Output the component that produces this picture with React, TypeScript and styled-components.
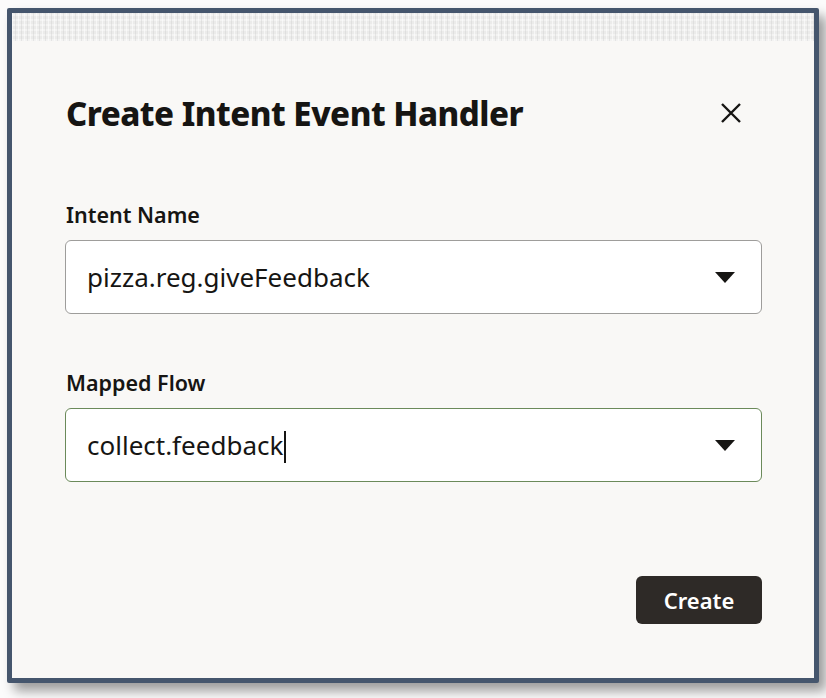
import React from "react";
import styled, { createGlobalStyle } from "styled-components";

const Global = createGlobalStyle`
  html, body { margin: 0; padding: 0; background: #fbfbfb; }
  body { font-family: "Noto Sans", "Open Sans", sans-serif; }
`;

const Stage = styled.div`
  width: 826px;
  height: 698px;
  padding: 8px 0 0 7px;
  box-sizing: border-box;
`;

const Frame = styled.div`
  width: 812px;
  height: 675px;
  box-sizing: border-box;
  border: 5px solid #45566d;
  border-radius: 2px;
  background: #f9f8f6;
  box-shadow: 7px 8px 12px rgba(0, 0, 0, 0.38);
  display: flex;
  flex-direction: column;
`;

const TextureStrip = styled.div`
  height: 28px;
  flex: none;
  background-color: #ebebea;
  background-image:
    repeating-linear-gradient(90deg, rgba(255,255,255,0.55) 0 1px, transparent 1px 3px, rgba(200,200,200,0.35) 3px 4px, transparent 4px 6px),
    repeating-linear-gradient(0deg, rgba(255,255,255,0.4) 0 2px, transparent 2px 5px);
`;

const Body = styled.div`
  flex: 1;
  display: flex;
  flex-direction: column;
  padding: 50px 52px 0 53px;
`;

const Header = styled.div`
  display: flex;
  align-items: center;
  justify-content: space-between;
  height: 44px;
`;

const Title = styled.h1`
  margin: 0 0 0 1px;
  font-family: "Noto Sans", sans-serif;
  font-weight: 800;
  font-size: 33px;
  letter-spacing: -0.5px;
  color: #161513;
`;

const CloseButton = styled.button`
  border: none;
  background: transparent;
  padding: 0;
  margin-right: 19px;
  width: 24px;
  height: 24px;
  display: flex;
  align-items: center;
  justify-content: center;
  cursor: pointer;
`;

const Field = styled.div<{ $top: number }>`
  display: flex;
  flex-direction: column;
  margin-top: ${(p) => p.$top}px;
`;

const Label = styled.label`
  font-size: 21.5px;
  font-weight: 600;
  color: #161513;
  margin-left: 1px;
  line-height: 28px;
  margin-bottom: 11px;
`;

const Select = styled.div<{ $focused?: boolean }>`
  height: 74px;
  box-sizing: border-box;
  border: 1px solid ${(p) => (p.$focused ? "#6b8a5a" : "#9e9d9b")};
  border-radius: 6px;
  background: #ffffff;
  display: flex;
  align-items: center;
  padding: 0 26px 0 21px;
`;

const Value = styled.span`
  flex: 1;
  font-size: 26px;
  color: #161513;
  display: flex;
  align-items: center;
`;

const Caret = styled.span`
  display: inline-block;
  width: 1.5px;
  height: 32px;
  margin-top: 4px;
  background: #161513;
  margin-left: 1px;
`;

const Footer = styled.div`
  margin-top: auto;
  margin-bottom: 54px;
  display: flex;
  justify-content: flex-end;
`;

const PrimaryButton = styled.button`
  width: 126px;
  height: 48px;
  border: none;
  border-radius: 6px;
  background: #2e2a27;
  color: #ffffff;
  font-family: "Noto Sans", sans-serif;
  font-weight: 600;
  font-size: 22px;
  cursor: pointer;
`;

const Triangle = () => (
  <svg width="20" height="11" viewBox="0 0 20 11">
    <path d="M0 0 H20 L10 11 Z" fill="#161513" />
  </svg>
);

export default function App() {
  return (
    <>
      <Global />
      <Stage>
        <Frame>
          <TextureStrip />
          <Body>
            <Header>
              <Title>Create Intent Event Handler</Title>
              <CloseButton aria-label="Close">
                <svg width="20" height="20" viewBox="0 0 20 20">
                  <path d="M1 1 L19 19 M19 1 L1 19" stroke="#161513" strokeWidth="2.4" />
                </svg>
              </CloseButton>
            </Header>
            <Field $top={66}>
              <Label>Intent Name</Label>
              <Select>
                <Value>pizza.reg.giveFeedback</Value>
                <Triangle />
              </Select>
            </Field>
            <Field $top={55}>
              <Label>Mapped Flow</Label>
              <Select $focused>
                <Value>
                  collect.feedback
                  <Caret />
                </Value>
                <Triangle />
              </Select>
            </Field>
            <Footer>
              <PrimaryButton>Create</PrimaryButton>
            </Footer>
          </Body>
        </Frame>
      </Stage>
    </>
  );
}
